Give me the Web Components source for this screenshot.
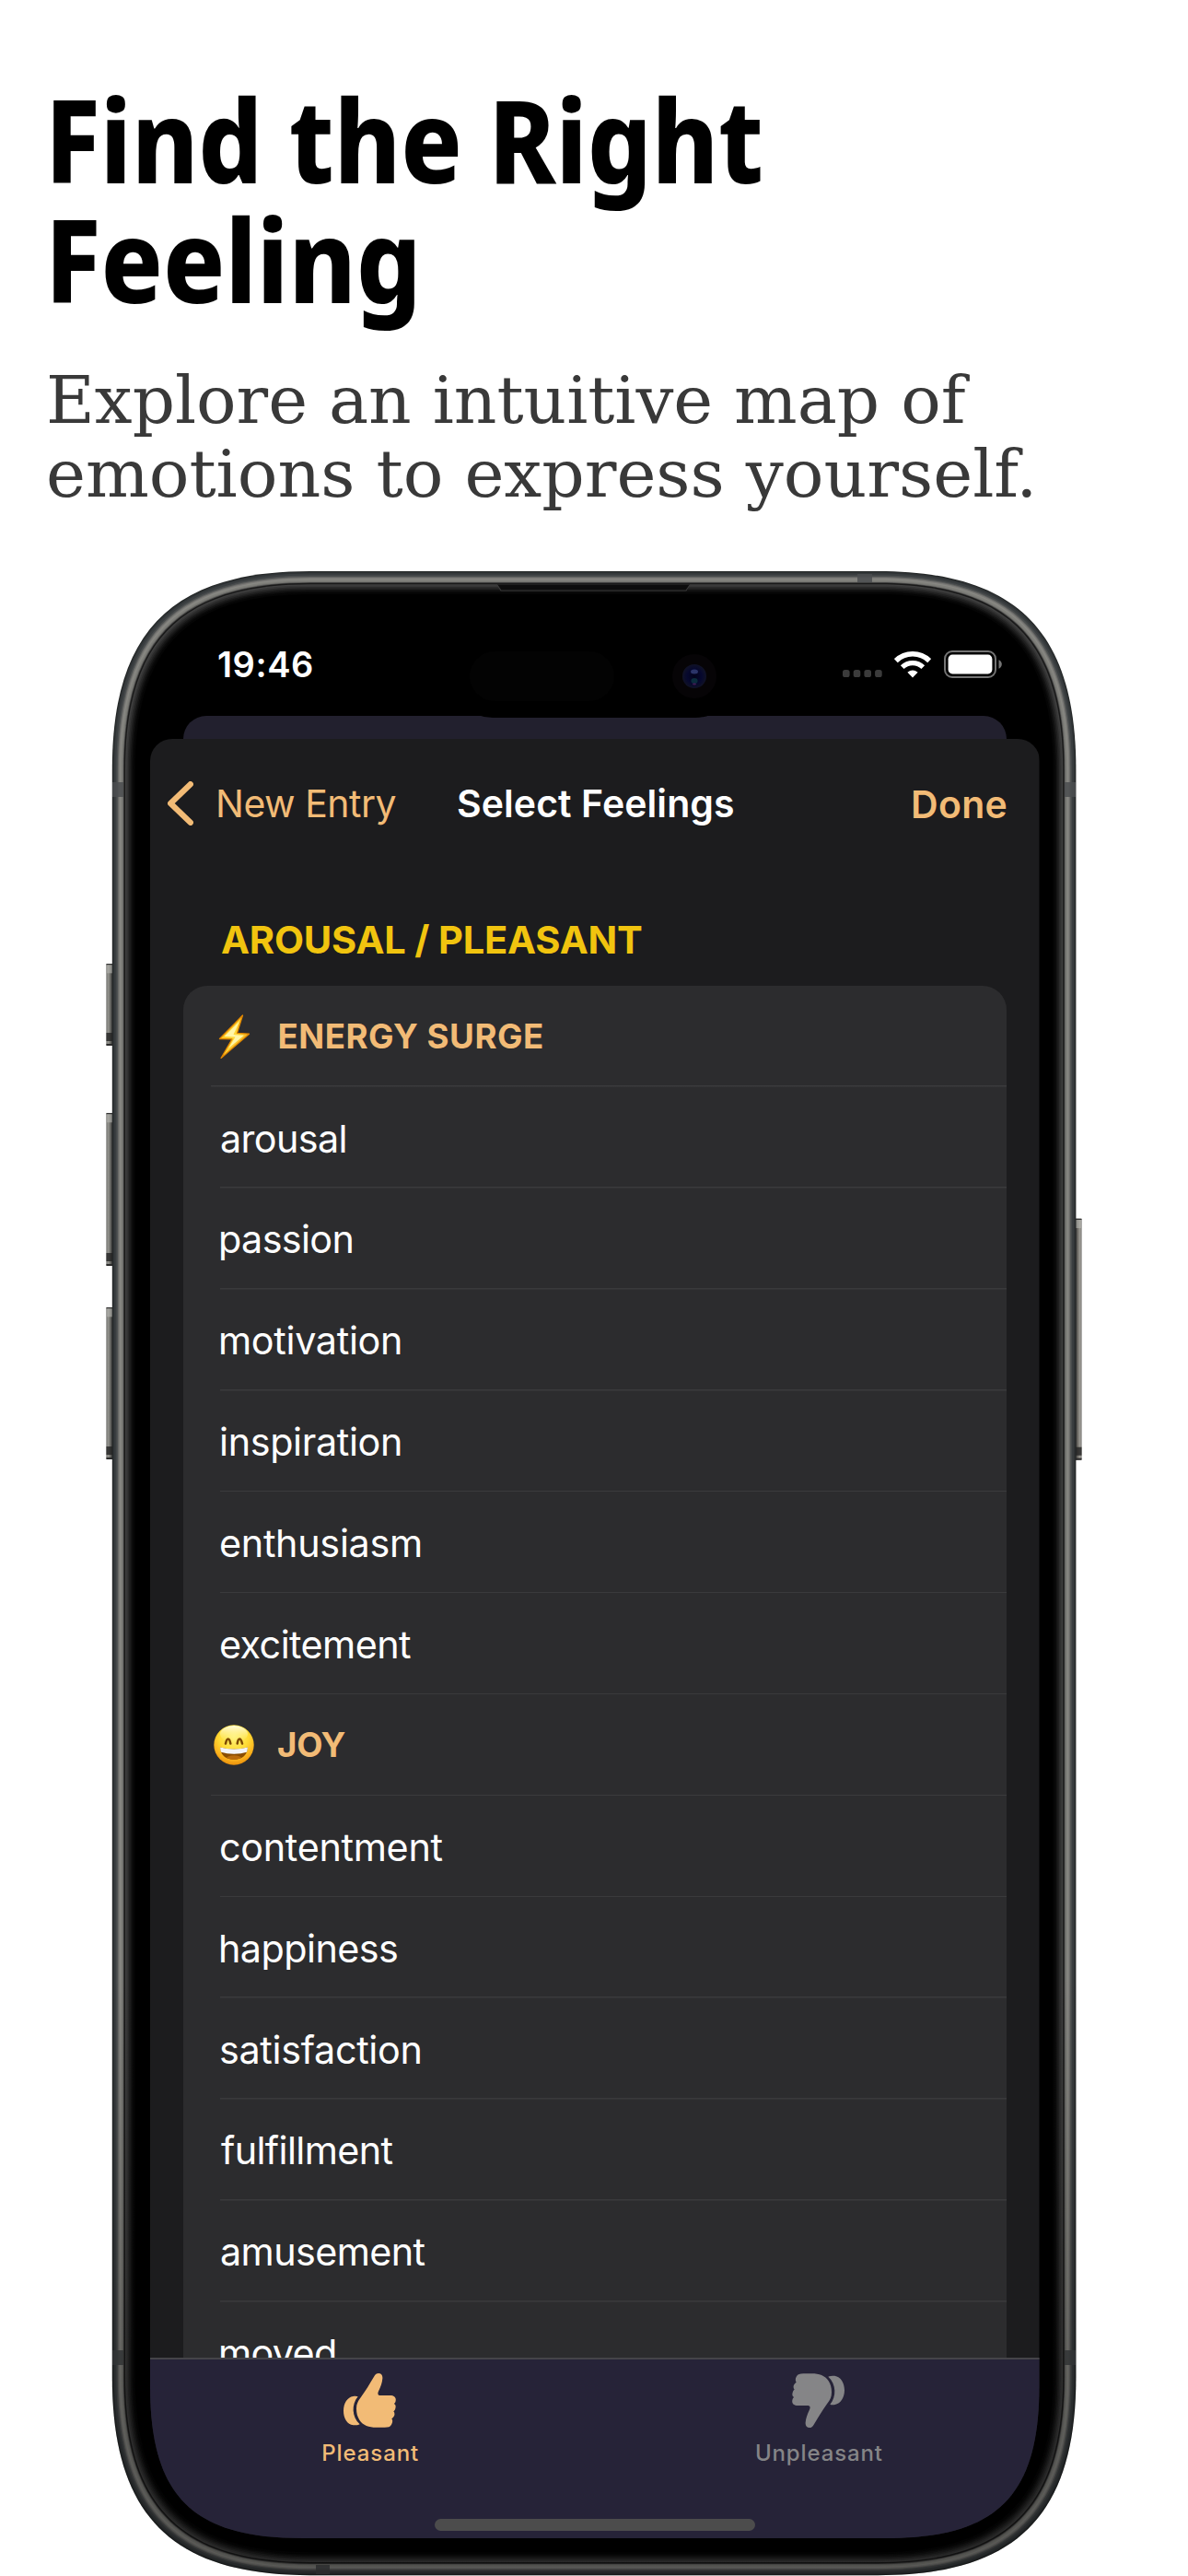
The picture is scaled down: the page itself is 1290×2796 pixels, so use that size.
<!DOCTYPE html>
<html lang="en">
<head>
<meta charset="utf-8">
<title>Find the Right Feeling</title>
<style>
html,body{margin:0;padding:0;background:#fff}
body{width:1290px;height:2796px;overflow:hidden;font-family:Inter,"Liberation Sans",sans-serif}
</style>
</head>
<body>
<promo-page></promo-page>
<script>
const define = (name, html, setup) => customElements.define(name, class extends HTMLElement {
  constructor() {
    super();
    this.attachShadow({ mode: 'open' });
  }
  connectedCallback() {
    this.shadowRoot.innerHTML = html;
    if (setup) setup(this, this.shadowRoot);
  }
});

// One line of text whose ink spans exactly `w` pixels, by tracking or by horizontal scale.
define('fit-text', `<style>
  :host{display:block;white-space:pre;flex:none}
  span{display:inline-block;transform-origin:0 50%}
</style><span></span>`, (el, root) => {
  const span = root.querySelector('span');
  const text = el.getAttribute('text');
  const w = +el.getAttribute('w');
  span.textContent = text;
  const cs = getComputedStyle(el);
  const ctx = document.createElement('canvas').getContext('2d');
  ctx.font = `${cs.fontWeight} ${cs.fontSize} ${cs.fontFamily}`;
  const m = ctx.measureText(text);
  const ink = m.actualBoundingBoxLeft + m.actualBoundingBoxRight;
  if (el.hasAttribute('scale')) {
    const s = w / ink;
    span.style.transform = `scaleX(${s})`;
    span.style.marginLeft = m.actualBoundingBoxLeft * s + 'px';
  } else {
    span.style.letterSpacing = (w - ink) / (text.length - 1) + 'px';
    span.style.marginLeft = m.actualBoundingBoxLeft + 'px';
    el.style.width = w + 'px';
  }
});

define('promo-heading', `<style>
  :host{display:block;box-sizing:border-box;height:620px;padding:86px 0 0 53px}
  h1{margin:0 0 0 5px;font:800 125px/130px "Noto Sans",sans-serif;color:#000}
  p{margin:49px 0 0;font:400 71px/80px "DejaVu Serif Condensed","DejaVu Serif",serif;color:#393939}
</style>
<h1><fit-text scale w="768" text="Find the Right"></fit-text><fit-text scale w="392" text="Feeling"></fit-text></h1>
<p><fit-text scale w="1000" text="Explore an intuitive map of"></fit-text><fit-text scale w="1067" text="emotions to express yourself."></fit-text></p>`);

define('phone-frame', `<style>
  :host{display:block;position:relative;box-sizing:border-box;width:1060px;height:2176px;margin-left:115px;padding:40px 46.5px 0 48px}
  svg{position:absolute;inset:0;width:1060px;height:2176px}
  .screen{position:relative;width:965.5px;height:2095px}
</style>
<svg viewBox="115 620 1060 2176">
  <defs>
    <linearGradient id="btn" x1="0" x2="1"><stop offset="0" stop-color="#4a4a46"/><stop offset=".2" stop-color="#9a9a95"/><stop offset=".55" stop-color="#74746f"/><stop offset="1" stop-color="#2a2b2b"/></linearGradient>
    <linearGradient id="btnR" x1="1" x2="0"><stop offset="0" stop-color="#5c5b57"/><stop offset=".2" stop-color="#a3a19b"/><stop offset=".55" stop-color="#77746e"/><stop offset="1" stop-color="#2a2b2b"/></linearGradient>
    <linearGradient id="shade" x1="0" y1="0" x2="0" y2="1"><stop offset=".7" stop-color="#000" stop-opacity="0"/><stop offset=".93" stop-color="#000" stop-opacity=".3"/><stop offset="1" stop-color="#000" stop-opacity=".35"/></linearGradient>
  </defs>
  <g id="buttons"></g>
  <g id="body"></g>
  <g fill="#4b4e50" fill-opacity=".85">
    <rect x="122" y="849" width="12" height="16"/><rect x="1156" y="849" width="12" height="16"/>
    <rect x="122" y="2551" width="12" height="16" fill="#313435"/><rect x="1156" y="2551" width="12" height="16" fill="#313435"/>
    <rect x="931" y="623" width="16" height="9"/><rect x="343" y="2784" width="15" height="10" fill="#2b2d2e"/>
  </g>
  <path d="M540 634.5H749L746 641H544Z" fill="#0d0d0d"/>
  <path d="M540 635L544 641H745L749 635" fill="none" stroke="#3a3a3a" stroke-width="1.2"/>
</svg>
<div class="screen"><slot></slot></div>`, (el, root) => {
  const outline = i => {
    const a = 121.8 + i, b = 620 + i, c = 1168.4 - i, d = 2795.2 - i, E = 215 - i, k = E * 65 / 215;
    return `M${a} ${b + E}C${a} ${b + k} ${a + k} ${b} ${a + E} ${b}H${c - E}C${c - k} ${b} ${c} ${b + k} ${c} ${b + E}V${d - E}C${c} ${d - k} ${c - k} ${d} ${c - E} ${d}H${a + E}C${a + k} ${d} ${a} ${d - k} ${a} ${d - E}Z`;
  };
  const layers = [[0,'#232626'],[1,'#303436'],[2.5,'#3a3e40'],[4.5,'#4a4d4e'],[6,'#646563'],[7,'#7b7a77'],[8.2,'#888883'],[9.5,'#7f7f7a'],[11,'#747470'],[12,'#4a4a49'],[12.8,'#191919'],[14.2,'#3f3f3f'],[15.5,'#363636'],[17,'#2a2a2a'],[18.5,'#1f1f1f'],[20,'#141414'],[21.5,'#0b0b0b'],[23,'#050505'],[25,'#000']];
  root.getElementById('body').innerHTML = layers.map(([i, c]) => `<path d="${outline(i)}" fill="${c}"/>`).join('') + `<path d="${outline(0)}" fill="url(#shade)"/>`;
  const btns = [[115.5,1046,89,'btn'],[115.5,1208,166,'btn'],[115.5,1419,165,'btn'],[1167.5,1322.7,262,'btnR']];
  root.getElementById('buttons').innerHTML = btns.map(([x, y, h, g]) =>
    `<rect x="${x}" y="${y}" width="7" height="${h}" rx="1" fill="url(#${g})"/><rect x="${x}" y="${y}" width="7" height="1.3" fill="#333"/><rect x="${x + .6}" y="${y + 1.3}" width="6" height="9" fill="#b5b5b0" opacity=".6"/><rect x="${x}" y="${y + h - 14}" width="7" height="9" fill="#222" opacity=".8"/><rect x="${x}" y="${y + h - 2}" width="7" height="2" fill="#2b2b2b"/>`).join('');
});

define('status-bar', `<style>
  :host{display:flex;align-items:center;box-sizing:border-box;height:117px;padding:5px 41px 0 74px;color:#fff;font-size:38px;font-weight:600;line-height:46px}
  .right{margin-left:auto;display:flex;align-items:flex-end;gap:13.5px;height:30px;position:relative}
  svg{display:block}
  .island{position:absolute;left:328px;top:30px;width:308px;height:89px;border-radius:44px;background:#000;z-index:1}
  .pill{position:absolute;left:19px;top:17px;width:157px;height:54px;border-radius:27px;background:#030303}
  .cam{position:absolute;left:239px;top:19px}
</style>
<fit-text w="102" text="19:46"></fit-text>
<div class="island"><div class="pill"></div>
<svg class="cam" width="48" height="50" viewBox="0 0 48 50"><defs><radialGradient id="l"><stop offset="0" stop-color="#03031a"/><stop offset=".6" stop-color="#06082e"/><stop offset="1" stop-color="#101226"/></radialGradient></defs><circle cx="24" cy="25" r="24" fill="#060406"/><circle cx="24" cy="25" r="13" fill="url(#l)"/><ellipse cx="24" cy="20" rx="4" ry="2.5" fill="#2b3468"/><ellipse cx="24" cy="30" rx="3.6" ry="3" fill="#0a2c3c"/><ellipse cx="24" cy="33.5" rx="2" ry="1" fill="#431a55"/></svg></div>
<div class="right">
<svg width="43" height="30" viewBox="0 0 43 30" fill="#3b3b3b"><rect y="21" width="7.6" height="8" rx="2.6"/><rect x="11.7" y="21" width="7.6" height="8" rx="2.6"/><rect x="23.4" y="21" width="7.6" height="8" rx="2.6"/><rect x="35.1" y="21" width="7.6" height="8" rx="2.6"/></svg>
<svg width="40" height="30" viewBox="0 0 40 30"><path d="M1.8 11.2A26 26 0 0 1 38.2 11.2" fill="none" stroke="#fff" stroke-width="5.6"/><path d="M8.7 18.2A16 16 0 0 1 31.3 18.2" fill="none" stroke="#fff" stroke-width="5.2"/><path d="M20 29.5L14.4 23.8Q20 19 25.6 23.8Z" fill="#fff"/></svg>
<svg width="63" height="30" viewBox="0 0 63 30"><rect x="1" y="1" width="55" height="28" rx="8" fill="none" stroke="#747474" stroke-width="2"/><rect x="4.6" y="4.6" width="47.8" height="20.8" rx="4.6" fill="#fff"/><path d="M59.5 10.3Q62.8 11.7 62.8 15T59.5 19.7Z" fill="#747474"/></svg>
</div>`);

define('nav-bar', `<style>
  :host{display:flex;align-items:center;height:139px;padding:0 36px 0 19px;font-size:41px;line-height:50px;color:#f2bb76}
  .back{display:flex;align-items:center;gap:27px}
  .title{color:#fff;font-weight:600;margin-left:67.5px}
  .done{margin-left:auto;font-weight:600;padding-top:2px}
</style>
<div class="back"><svg width="28" height="48" viewBox="0 0 28 48"><path d="M24.8 3.2L3.2 24L24.8 44.8" fill="none" stroke="#f2bb76" stroke-width="6.3" stroke-linecap="round" stroke-linejoin="round"/></svg><fit-text w="192.5" text="New Entry"></fit-text></div>
<fit-text class="title" w="299" text="Select Feelings"></fit-text>
<fit-text class="done" w="100.5" text="Done"></fit-text>`);

define('group-header', `<style>
  :host{display:flex;align-items:center;box-sizing:border-box;height:109.9px;padding-left:33px;gap:26px;font-size:36.7px;font-weight:700;line-height:44px;color:#f2bb76;background:linear-gradient(#3b3b3d,#3b3b3d) 29.5px 100%/100% 1.5px no-repeat}
  ::slotted(svg){display:block;width:44px;height:48px;flex:none}
</style><slot name="icon"></slot><slot></slot>`);

define('feeling-row', `<style>
  :host{display:flex;align-items:center;box-sizing:border-box;height:109.9px;padding:1.5px 0 0 41px;font-size:41.3px;line-height:50px;color:#fff;background:linear-gradient(#3a3a3c,#3a3a3c) 39.5px 100%/100% 1.5px no-repeat}
</style><slot></slot>`);

define('feeling-list', `<style>
  :host{display:block;flex:1;min-height:0;overflow:hidden;padding:0 36px}
  .section{display:flex;align-items:center;box-sizing:border-box;height:129px;padding:28.6px 0 0 41px;font-size:41.6px;font-weight:650;line-height:50px;color:#f1c40f}
  .card{border-radius:26px 26px 0 0;background:#2c2c2e;overflow:hidden}
</style>
<div class="section"><fit-text w="457" text="AROUSAL / PLEASANT"></fit-text></div>
<div class="card"></div>`, (el, root) => {
  const bolt = `<svg slot="icon" viewBox="0 0 44 48"><defs><linearGradient id="z" x1="0" y1="0" x2="1" y2="1"><stop offset="0" stop-color="#ffb300"/><stop offset=".5" stop-color="#ffd83a"/><stop offset="1" stop-color="#e98b00"/></linearGradient></defs><path d="M31.5 1L6.5 26.5L20 26.8L8 47.5L38.5 21.2L25.5 20.3Z" fill="url(#z)" stroke="#df8500" stroke-width="1.3" stroke-linejoin="round"/><path d="M28 7.5L11.5 24L23.5 24.5L16 37L33 22.7L21.5 22.1Z" fill="#fff6a8"/></svg>`;
  const grin = `<svg slot="icon" viewBox="0 0 44 48"><defs><radialGradient id="f" cx=".5" cy=".3" r=".72"><stop offset="0" stop-color="#fff27a"/><stop offset=".5" stop-color="#ffdc35"/><stop offset=".8" stop-color="#fbb01c"/><stop offset="1" stop-color="#e88b08"/></radialGradient><linearGradient id="h" x1="0" y1="0" x2="0" y2="1"><stop offset="0" stop-color="#fffbe0"/><stop offset="1" stop-color="#fff27a" stop-opacity="0"/></linearGradient><clipPath id="m"><path d="M7 26.5Q22 30.5 37 26.5Q36.2 39.5 22 39.7Q7.8 39.5 7 26.5Z"/></clipPath></defs><circle cx="22" cy="24" r="21.7" fill="url(#f)"/><ellipse cx="22" cy="12" rx="15" ry="9" fill="url(#h)"/><path d="M13 22.5Q14 17.5 15.7 17.5T18.3 22.5M25.7 22.5Q26.4 17.5 28.1 17.5T31 22.5" fill="none" stroke="#7d4a00" stroke-width="2.5" stroke-linecap="round"/><g clip-path="url(#m)"><rect x="6" y="25" width="32" height="16" fill="#8a4d00"/><ellipse cx="22" cy="39.5" rx="9" ry="4.3" fill="#b86a0c"/><path d="M6 25Q22 31 38 25L37 31.5Q22 36 7 31.5Z" fill="#f3f4f7"/></g></svg>`;
  const groups = [
    [bolt, 'ENERGY SURGE', 285.5, [['arousal',134.5],['passion',142.5],['motivation',195],['inspiration',195],['enthusiasm',216],['excitement',206]]],
    [grin, 'JOY', 72.5, [['contentment',240.5],['happiness',191],['satisfaction',216.5],['fulfillment',186.5],['amusement',221.5],['moved',124]]],
  ];
  const pad = { 'ENERGY SURGE': 1.5, JOY: 0 };
  root.querySelector('.card').innerHTML = groups.map(([icon, name, w, items]) =>
    `<group-header>${icon}<fit-text style="padding-left:${pad[name]}px" w="${w}" text="${name}"></fit-text></group-header>` +
    items.map(([t, iw]) => `<feeling-row><fit-text w="${iw}" text="${t}"></fit-text></feeling-row>`).join('')).join('');
});

define('tab-item', `<style>
  :host{display:flex;flex-direction:column;align-items:center;flex:1;padding-top:15px;font-size:24px;font-weight:500;line-height:30px}
  svg{display:block;width:57px;height:59px;margin:0 0 13.3px -2px}
  :host([down]) svg{transform:rotate(180deg)}
</style>
<svg viewBox="97 48 171 177" fill="currentColor"><path d="M211 48C220 48 225 55 224 65C223 78 218 91 213 102C206 116 209 120 219 120H249C262 120 269 127 267 137C266 142 265 145 261 147C267 150 268 155 266 162C265 167 263 170 260 172C264 176 264 182 262 187C260 191 257 194 254 196C258 202 257 209 253 215C249 222 243 224 231 224H203C180 224 160 217 149 200C142 189 139 178 139 163C139 148 144 139 153 127C169 105 181 85 197 58C201 51 205 48 211 48Z"/><path d="M144 124C123 148 123 190 150 214C146 217 139 217 129 217C109 214 97 194 97 170C97 145 110 126 128 123C135 122 140 122 144 124Z"/></svg>
<slot></slot>`);

define('tab-bar', `<style>
  :host{display:block;box-sizing:border-box;height:196px;border-top:2px solid #454449;background:#262338}
  .tabs{display:flex;margin:0 -4.5px}
  .home{width:348px;height:13px;border-radius:7px;background:#4c4c4c;margin:56px auto 0}
</style>
<div class="tabs">
<tab-item style="color:#f2bb76"><fit-text w="104" text="Pleasant"></fit-text></tab-item>
<tab-item down style="color:#858587"><fit-text w="137" text="Unpleasant"></fit-text></tab-item>
</div><div class="home"></div>`);

define('app-screen', `<style>
  :host{display:flex;flex-direction:column;height:2095px;clip-path:path("M0 0H965.5V1930C965.5 2049 919 2095 800 2095H165C46 2095 0 2049 0 1930Z")}
  .behind{flex:none;height:25px;margin:0 36px;border-radius:25px 25px 0 0;background:#22202e}
  .sheet{flex:1;min-height:0;display:flex;flex-direction:column;border-radius:24px 24px 0 0;background:#1c1c1e;overflow:hidden}
  nav-bar,tab-bar,status-bar{flex:none}
</style>
<status-bar></status-bar><div class="behind"></div>
<div class="sheet"><nav-bar></nav-bar><feeling-list></feeling-list><tab-bar></tab-bar></div>`);

define('promo-page', `<style>:host{display:block;width:1290px;height:2796px;overflow:hidden;background:#fff}</style>
<promo-heading></promo-heading><phone-frame><app-screen></app-screen></phone-frame>`);
</script>
</body>
</html>
